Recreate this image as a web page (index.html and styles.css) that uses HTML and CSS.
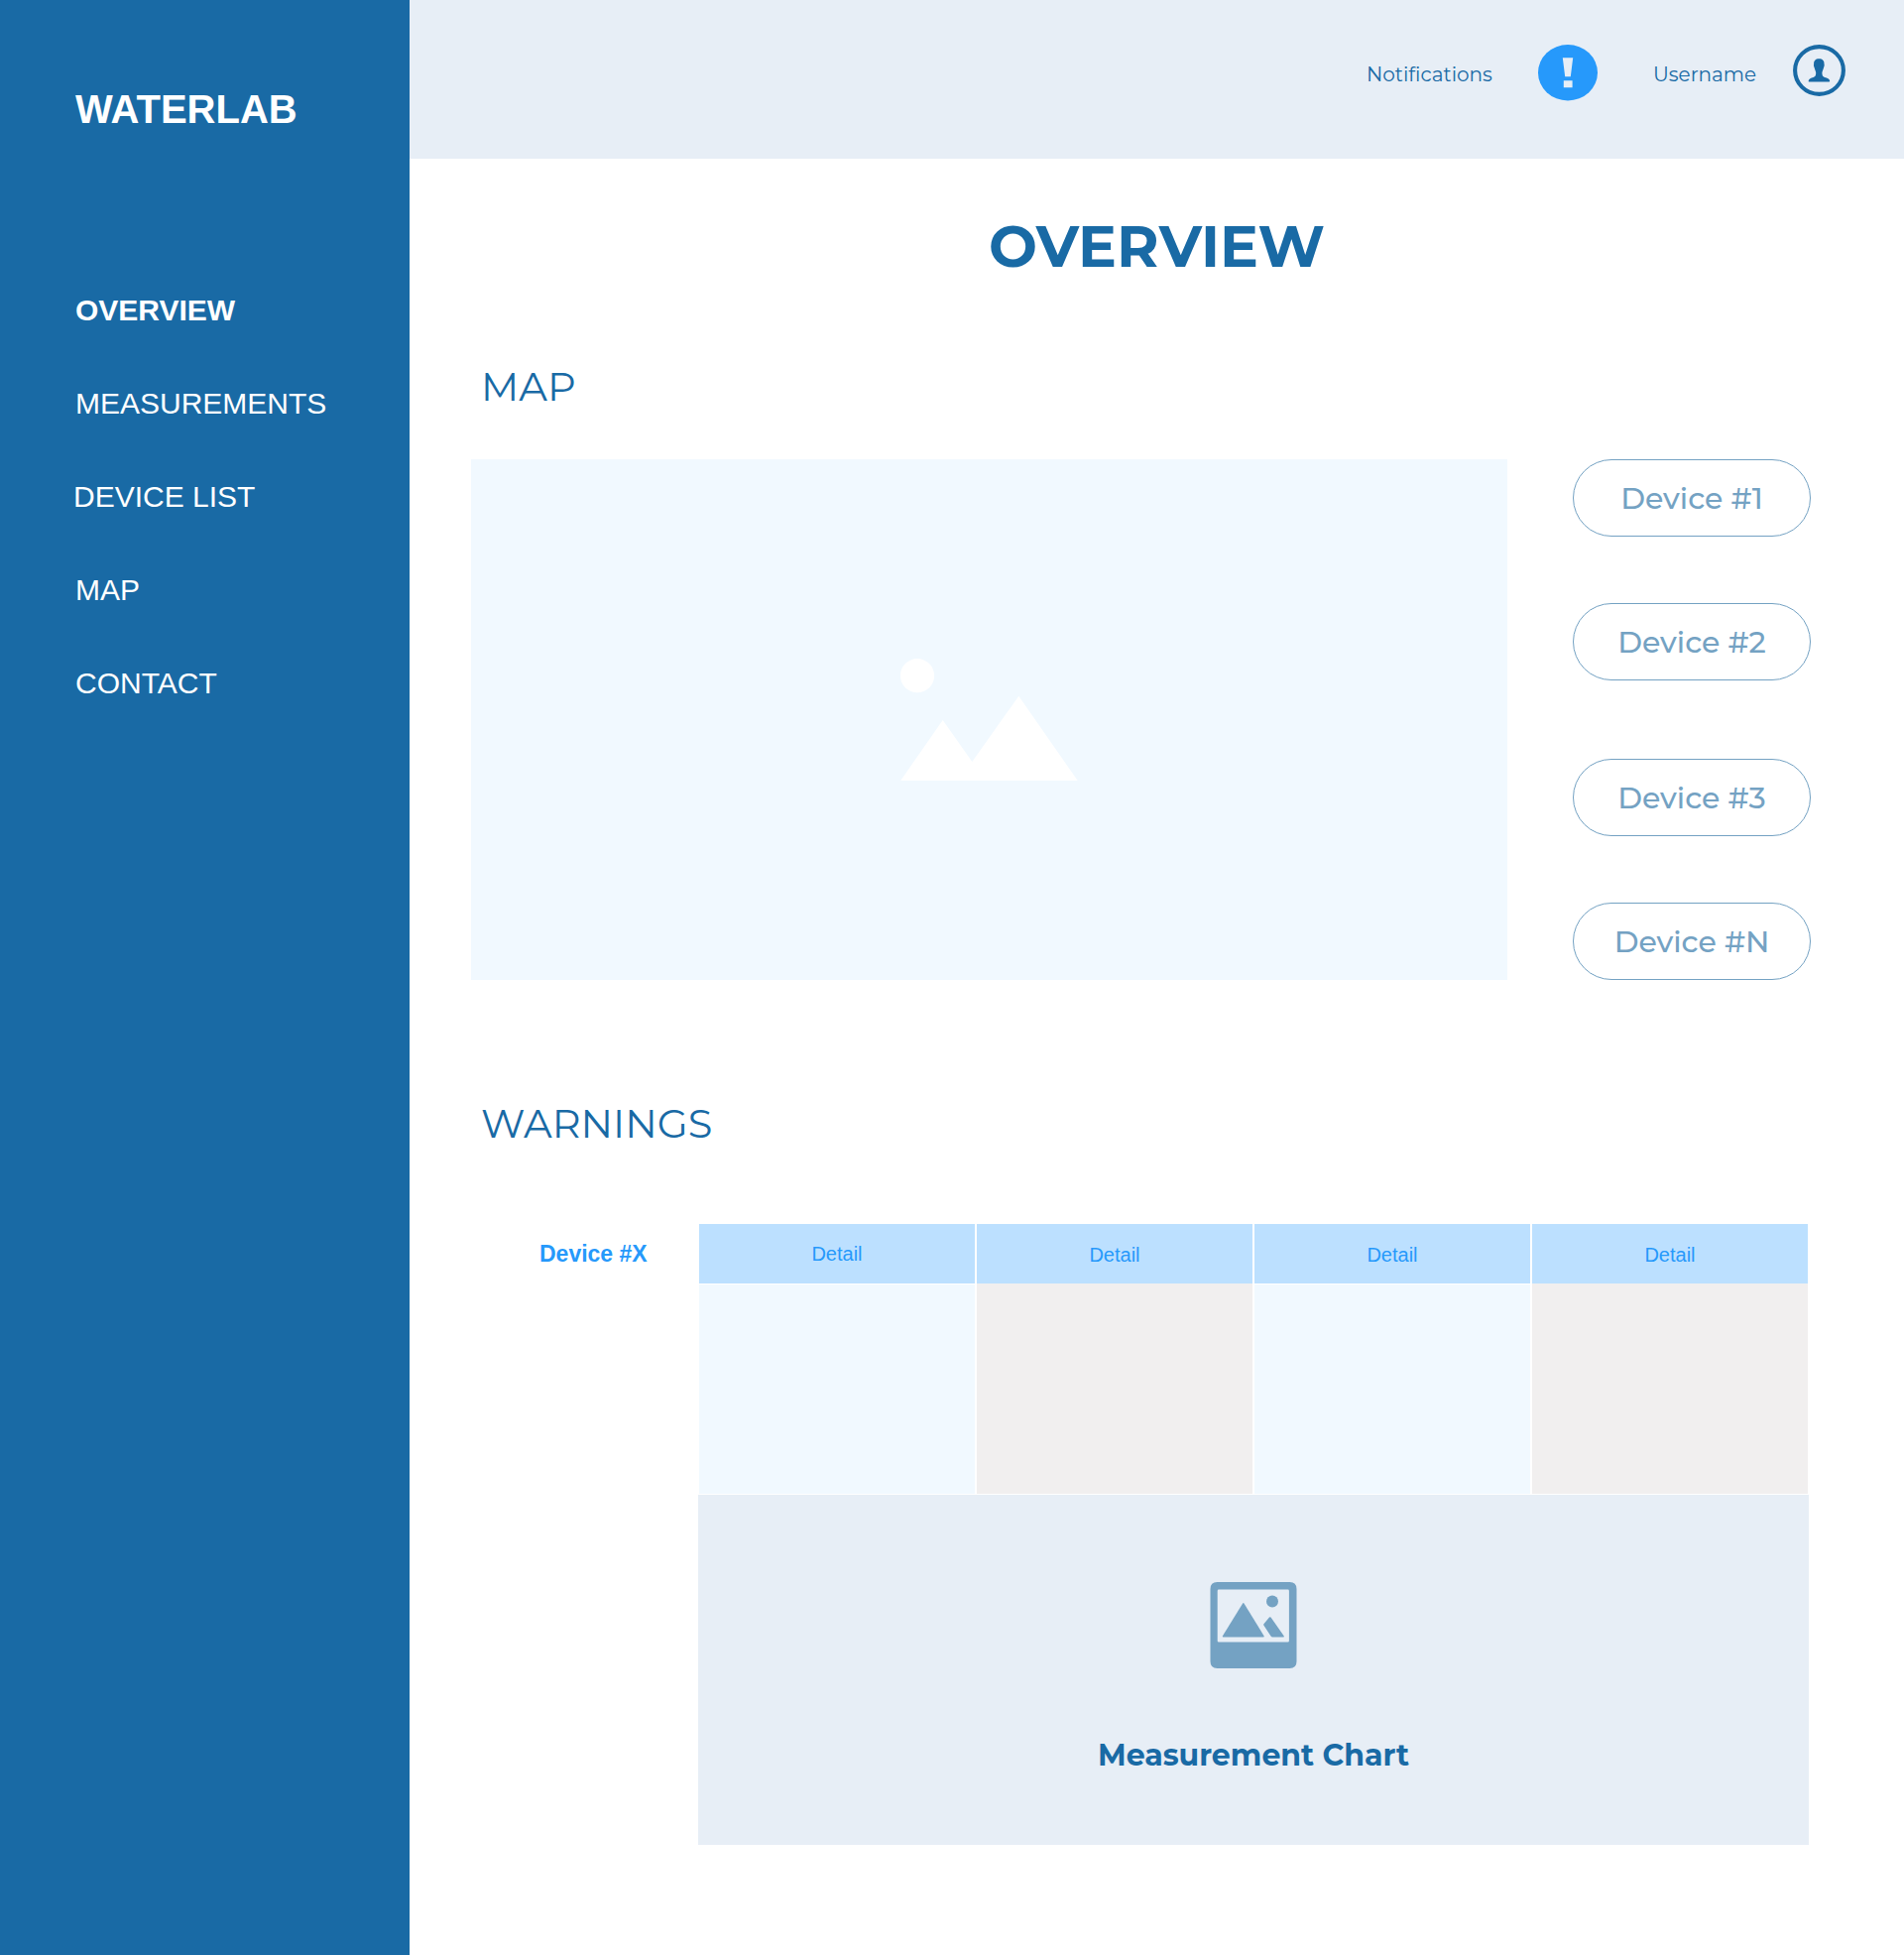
FILE: index.html
```html
<!DOCTYPE html>
<html lang="en">
<head>
<meta charset="utf-8">
<title>Waterlab – Overview</title>
<link rel="stylesheet" href="styles.css">
</head>
<body>
<aside class="sidebar">
  <div class="brand">WATERLAB</div>
  <nav class="nav">
    <a class="nav-item active">OVERVIEW</a>
    <a class="nav-item">MEASUREMENTS</a>
    <a class="nav-item outdent">DEVICE LIST</a>
    <a class="nav-item">MAP</a>
    <a class="nav-item">CONTACT</a>
  </nav>
</aside>
<div class="page">
  <header class="topbar">
    <span class="label notifications">Notifications</span>
    <svg class="alert" width="60" height="57" viewBox="0 0 60 57">
      <ellipse cx="30" cy="28.3" rx="30" ry="28.2" fill="#2699fb"/>
      <path d="M24.8 13.3H35.2L32.8 32.3H27.2Z M25.8 36.2H34.6V43.2H25.8Z" fill="#e7eef6"/>
    </svg>
    <span class="label username">Username</span>
    <svg class="avatar" width="53" height="52" viewBox="0 0 53 52">
      <ellipse cx="26.5" cy="26" rx="24.4" ry="23.9" fill="none" stroke="#196aa5" stroke-width="4.1"/>
      <path d="M26.3 14.2C29.8 14.2 31.7 16.2 31.5 19.6C32 21 31.4 22.4 30.9 23.4C30.4 25.6 29.4 27 29.4 28.6C29.4 31 30 32.4 32 33C34.6 33.7 37 34.4 37.2 36.8Q37.2 37.6 36.4 37.6H16.3Q15.5 37.6 15.6 36.8C16 34.4 18.2 33.7 20.6 33C22.6 32.4 23.2 31 23.2 28.6C23.2 27 22.2 25.6 21.7 23.4C21.2 22.4 20.6 21 21.1 19.6C20.9 16.2 22.8 14.2 26.3 14.2Z" fill="#196aa5"/>
    </svg>
  </header>
  <main class="content">
    <h1 class="title">OVERVIEW</h1>
    <section>
      <h2 class="heading map-heading">MAP</h2>
      <div class="map-row">
        <div class="map">
          <svg width="179" height="123" viewBox="0 0 179 123" fill="#fff">
            <circle cx="17" cy="17.2" r="17.1"/>
            <path d="M0.2 123L42.7 62L72.3 104L119.3 37.7L178.7 123Z"/>
          </svg>
        </div>
        <div class="devices">
          <div class="device-pair">
            <button class="device">Device #1</button>
            <button class="device">Device #2</button>
          </div>
          <div class="device-pair">
            <button class="device">Device #3</button>
            <button class="device">Device #N</button>
          </div>
        </div>
      </div>
    </section>
    <section class="warnings">
      <h2 class="heading">WARNINGS</h2>
      <div class="warning-row">
        <div class="device-name">Device #X</div>
        <div class="report">
          <div class="columns">
            <div class="column"><div class="column-head first">Detail</div><div class="cell blue"></div></div>
            <div class="column"><div class="column-head">Detail</div><div class="cell"></div></div>
            <div class="column"><div class="column-head">Detail</div><div class="cell blue"></div></div>
            <div class="column"><div class="column-head">Detail</div><div class="cell"></div></div>
          </div>
          <div class="chart">
            <svg width="88" height="87" viewBox="0 0 88 87" fill="#74a2c3">
              <path fill-rule="evenodd" d="M7.5 0H80.5Q87.5 0 87.5 7V80Q87.5 87 80.5 87H7.5Q0.5 87 0.5 80V7Q0.5 0 7.5 0ZM9 7.6Q7.7 7.6 7.7 8.9V59.3Q7.7 60.6 9 60.6H78.6Q79.9 60.6 79.9 59.3V8.9Q79.9 7.6 78.6 7.6Z"/>
              <circle cx="63" cy="19.6" r="6"/>
              <path d="M33 21.7Q33.8 20.5 34.6 21.7L54.7 54.4Q55 55.4 54 55.4H13.6Q12.5 55.4 12.8 54.4Z"/>
              <path d="M60 35.6Q60.7 34.7 61.5 35.6L74.8 54.4Q75.1 55.4 74.2 55.4H62.8Q62 55.4 61.5 54.6L54.3 43.4Q54 42.7 54.4 42.2Z"/>
            </svg>
            <div class="chart-title">Measurement Chart</div>
          </div>
        </div>
      </div>
    </section>
  </main>
</div>
</body>
</html>
```
FILE: styles.css
```css
* { box-sizing: border-box; }

body {
  margin: 0;
  display: flex;
  min-height: 1971px;
  background: #fff;
  color: #196aa5;
  font-family: Montserrat, Inter, sans-serif;
  font-variant-ligatures: none;
}

svg { display: block; flex: none; }

/* Sidebar */
.sidebar {
  flex: none;
  width: 413px;
  padding: 86px 0 0 76px;
  background: #196aa5;
  color: #fff;
  font-family: Arial, "Liberation Sans", sans-serif;
}
.brand {
  font-size: 40px;
  font-weight: 700;
  line-height: 48px;
}
.nav {
  display: flex;
  flex-direction: column;
  gap: 60px;
  margin-top: 162px;
}
.nav-item {
  font-size: 30px;
  line-height: 34px;
  white-space: nowrap;
}
.nav-item.active { font-weight: 700; }
.nav-item.outdent { margin-left: -2px; }

/* Top bar */
.page { flex: 1; }
.topbar {
  display: flex;
  align-items: flex-start;
  height: 160px;
  padding: 45px 0 0 965px;
  background: #e7eef6;
}
.label {
  margin-top: 18px;
  font-size: 20px;
  line-height: 24px;
  white-space: nowrap;
}
.notifications { width: 131px; }
.username { width: 106px; }
.alert { margin: 0 56px 0 42px; }
.avatar { margin-left: 35px; }

/* Content */
.content { padding: 53px 94px 0 62px; }
.title {
  margin: 0;
  padding-left: 32px;
  font-size: 58px;
  font-weight: 700;
  line-height: 72px;
  text-align: center;
}
.heading {
  margin: 0;
  padding-left: 10px;
  font-size: 40px;
  font-weight: 400;
  line-height: 46px;
}
.map-heading { margin-top: 82px; }
.map-row {
  display: flex;
  justify-content: space-between;
  height: 525px;
  margin-top: 50px;
}
.map {
  display: flex;
  align-items: center;
  justify-content: center;
  width: 1045px;
  background: #f1f9ff;
}
.devices {
  display: flex;
  flex-direction: column;
  justify-content: space-between;
  width: 240px;
}
.device-pair {
  display: flex;
  flex-direction: column;
  gap: 67px;
}
.device {
  height: 78px;
  padding: 2px 0 0;
  border: 1px solid #74a2c3;
  border-radius: 39px;
  background: none;
  color: #74a2c3;
  font: 500 30px/74px Montserrat, Inter, sans-serif;
}

/* Warnings */
.warnings { margin-top: 122px; }
.warning-row {
  display: flex;
  margin-top: 78px;
  font-family: Arial, "Liberation Sans", sans-serif;
}
.device-name {
  width: 229px;
  padding-left: 69px;
  color: #2699fb;
  font-size: 23px;
  font-weight: 700;
  line-height: 60px;
}
.report { width: 1120px; }
.columns {
  display: grid;
  grid-template-columns: repeat(4, 278px);
  gap: 2px;
  height: 272px;
  padding: 0 1px;
}
.column {
  display: flex;
  flex-direction: column;
}
.column-head {
  height: 60px;
  background: #bce0ff;
  color: #2699fb;
  font-size: 20px;
  line-height: 62px;
  text-align: center;
}
.column-head.first { line-height: 60px; }
.cell {
  flex: 1;
  background: #f1efef;
}
.cell.blue {
  margin-top: 1px;
  background: #f1f9ff;
}
.chart {
  display: flex;
  flex-direction: column;
  align-items: center;
  height: 353px;
  margin-top: 1px;
  padding-top: 88px;
  background: #e7eef6;
}
.chart-title {
  margin-top: 70px;
  font-family: Montserrat, Inter, sans-serif;
  font-size: 30px;
  font-weight: 700;
  line-height: 36px;
  white-space: nowrap;
}
```
